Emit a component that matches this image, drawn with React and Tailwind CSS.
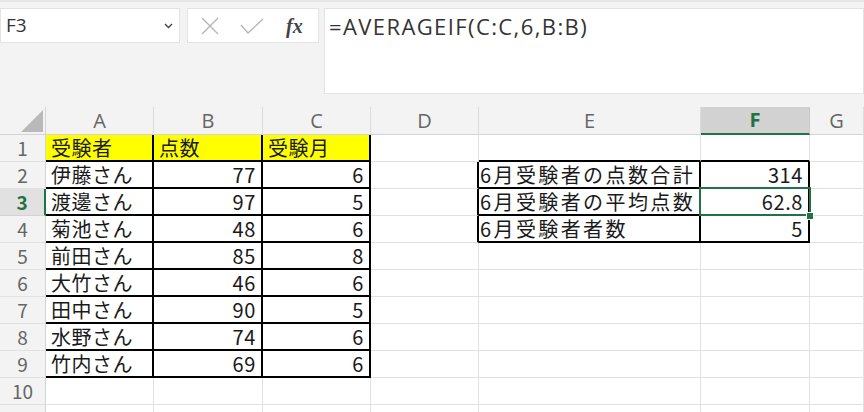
import React from "react";

const COLS = ["A", "B", "C", "D", "E", "F", "G"];

const data = [
  ["受験者", "点数", "受験月", "", "", ""],
  ["伊藤さん", "77", "6", "", "6月受験者の点数合計", "314"],
  ["渡邊さん", "97", "5", "", "6月受験者の平均点数", "62.8"],
  ["菊池さん", "48", "6", "", "6月受験者者数", "5"],
  ["前田さん", "85", "8"],
  ["大竹さん", "46", "6"],
  ["田中さん", "90", "5"],
  ["水野さん", "74", "6"],
  ["竹内さん", "69", "6"],
  [],
  [],
];

const inLeftTable = (r, c) => r >= 1 && r <= 9 && c >= 1 && c <= 3;
const inRightTable = (r, c) => r >= 2 && r <= 4 && c >= 5 && c <= 6;

const Cell = ({ r, c, value }) => {
  const boxed = inLeftTable(r, c) || inRightTable(r, c);
  const rightBlack = boxed || (c === 4 && r >= 2 && r <= 4);
  const bottomBlack = boxed || (r === 1 && (c === 5 || c === 6));
  const numeric = value !== "" && !isNaN(Number(value));
  const yellow = r === 1 && c <= 3;

  return (
    <div
      className={[
        "flex items-end overflow-visible whitespace-nowrap leading-[25px] text-[#1a1a1a]",
        rightBlack ? "border-r-2 border-r-black" : "border-r border-r-[#e1e1e1]",
        bottomBlack ? "border-b-2 border-b-black" : "border-b border-b-[#e1e1e1]",
        yellow ? "bg-[#ffff00]" : "bg-white",
        numeric ? "justify-end pr-[5px] tracking-[0.6px]" : c === 5 ? "pl-[1px] tracking-[2.4px]" : "pl-[5px] tracking-[0.5px]",
      ].join(" ")}
    >
      {value}
    </div>
  );
};

export default function App() {
  return (
    <div
      className="w-[864px] h-[412px] overflow-hidden bg-[#f3f3f3] text-[#222]"
      style={{ fontFamily: '"Noto Sans CJK JP", "Noto Sans", sans-serif' }}
    >
      <div className="h-[3px] border-t-2 border-t-[#e6e6e6]" />
      {/* formula bar */}
      <div className="flex items-start pt-[5px] h-[104px]">
        <div className="w-[180px] h-[35px] bg-white border border-[#e3e3e3] flex items-center justify-between pl-[5px] pr-[6px]">
          <span className="text-[19px] text-[#333]" style={{ fontFamily: '"Open Sans", sans-serif' }}>
            F3
          </span>
          <svg width="9" height="6" viewBox="0 0 9 6">
            <path d="M1 1 L4.5 4.5 L8 1" fill="none" stroke="#444" strokeWidth="1.4" />
          </svg>
        </div>
        <div className="ml-[7px] w-[132px] h-[35px] bg-white border border-[#e3e3e3] flex items-center pl-[13px]">
          <svg width="18" height="18" viewBox="0 0 18 18">
            <path d="M1 1 L17 17 M17 1 L1 17" stroke="#b4b4b4" strokeWidth="1.3" />
          </svg>
          <svg className="ml-[21px]" width="24" height="16" viewBox="0 0 24 16">
            <path d="M1 7 L8 15 L23 1" fill="none" stroke="#b4b4b4" strokeWidth="1.3" />
          </svg>
          <span
            className="ml-[22px] text-[20px] italic font-bold text-[#444] leading-none"
            style={{ fontFamily: '"Liberation Serif", serif' }}
          >
            fx
          </span>
        </div>
        <div className="ml-[5px] flex-1 h-[86px] bg-white border border-[#e3e3e3] pl-[4px] pt-[1px]">
          <span
            className="text-[22px] text-[#333] tracking-[1.4px]"
            style={{ fontFamily: '"Open Sans", sans-serif' }}
          >
            =AVERAGEIF(C:C,6,B:B)
          </span>
        </div>
      </div>

      {/* sheet */}
      <div className="relative">
        <div className="grid grid-cols-[46px_108px_109px_108px_108px_222px_109px_54px] grid-rows-[28px_repeat(11,27px)] text-[20px]">
          {/* corner */}
          <div className="flex items-end justify-end pr-[2px] pb-[2px] border-r border-r-[#d4d4d4] border-b border-b-[#d4d4d4]">
            <svg width="22" height="22" viewBox="0 0 22 22">
              <path d="M22 0 L22 22 L0 22 Z" fill="#b9b9b9" />
            </svg>
          </div>
          {COLS.map((col) =>
            col === "F" ? (
              <div
                key={col}
                className="flex items-center justify-center bg-[#d2d2d2] border-b-2 border-b-[#217346] border-r border-r-[#c8c8c8] text-[#217346] font-bold text-[20px]"
                style={{ fontFamily: '"Open Sans", sans-serif' }}
              >
                {col}
              </div>
            ) : (
              <div
                key={col}
                className="flex items-center justify-center border-b border-b-[#d4d4d4] border-r border-r-[#dcdcdc] text-[#666] text-[20px]"
                style={{ fontFamily: '"Open Sans", sans-serif' }}
              >
                {col}
              </div>
            )
          )}
          {data.map((row, ri) => {
            const r = ri + 1;
            return (
              <React.Fragment key={r}>
                {r === 3 ? (
                  <div className="flex items-center justify-center bg-[#e1e1e1] border-r-2 border-r-[#217346] border-b border-b-[#d4d4d4] text-[#217346] font-bold text-[19px]">
                    {r}
                  </div>
                ) : (
                  <div className="flex items-center justify-center border-r border-r-[#d4d4d4] border-b border-b-[#e1e1e1] text-[#666] text-[19px]">
                    {r}
                  </div>
                )}
                {COLS.map((col, ci) => (
                  <Cell key={col} r={r} c={ci + 1} value={row[ci] ?? ""} />
                ))}
              </React.Fragment>
            );
          })}
        </div>
        {/* selection F3 */}
        <div className="absolute left-[699px] top-[80px] w-[112px] h-[29px] border-2 border-[#217346] pointer-events-none" />
        <div className="absolute left-[806px] top-[105px] w-[8px] h-[8px] bg-[#217346] border border-white pointer-events-none" />
      </div>
    </div>
  );
}
